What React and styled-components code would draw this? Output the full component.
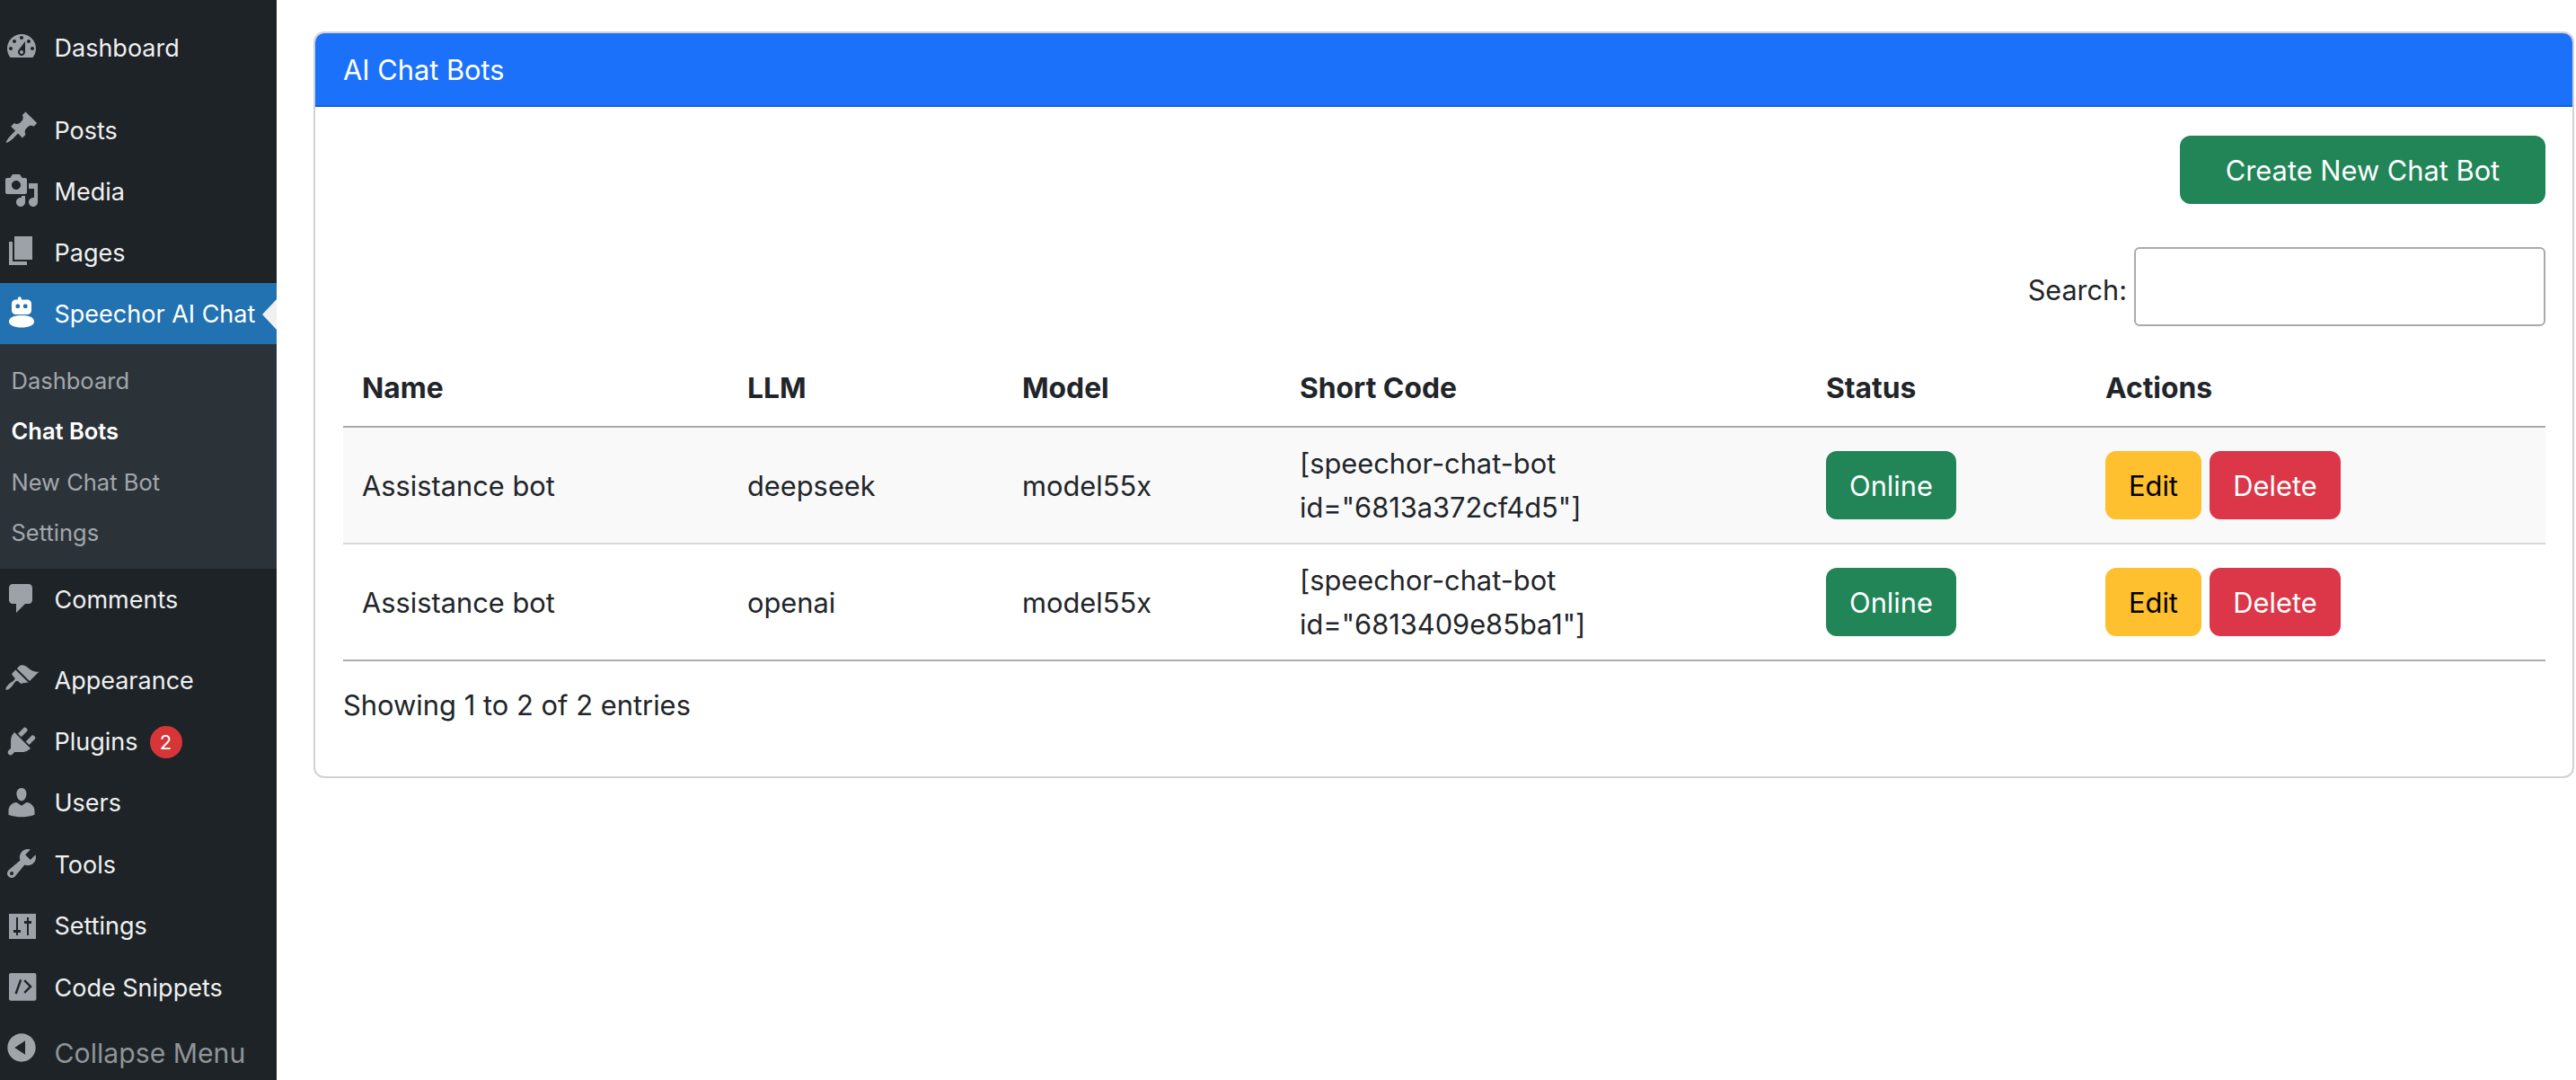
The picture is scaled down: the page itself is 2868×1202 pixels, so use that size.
import React from "react";
import styled, { createGlobalStyle } from "styled-components";

const Global = createGlobalStyle`
  html, body { margin: 0; padding: 0; height: 1202px; overflow: hidden; background: #fff; }
  body { font-family: Inter, "Liberation Sans", sans-serif; -webkit-font-smoothing: antialiased; color: #212529; }
  * { box-sizing: border-box; }
`;

const Page = styled.div`
  display: flex;
  width: 2868px;
  height: 1202px;
  overflow: hidden;
`;

const Sidebar = styled.nav`
  width: 308px;
  height: 1202px;
  flex: none;
  background: #1d2327;
  padding-top: 19px;
`;

const MenuRow = styled.div`
  position: relative;
  display: flex;
  align-items: center;
  height: ${p => p.$h || 68.4}px;
  margin-top: ${p => p.$gap || 0}px;
  padding-left: 4px;
  background: ${p => (p.$active ? "#2271b1" : "transparent")};
  color: ${p => (p.$muted ? "#8f9498" : p.$active ? "#fff" : "#f0f0f1")};
  font-size: ${p => (p.$muted ? 30.2 : 27)}px;
  line-height: 1;
`;

const IconSvg = styled.svg`
  width: 40px;
  height: 40px;
  flex: none;
  margin-right: 16.5px;
  fill: ${p => p.$color || "#9ca2a7"};
  transform: translateY(${p => p.$dy || -1}px);
`;

const Label = styled.span`
  white-space: nowrap;
`;

const Pointer = styled.span`
  position: absolute;
  right: 0;
  top: 18px;
  width: 0;
  height: 0;
  border-top: 17px solid transparent;
  border-bottom: 17px solid transparent;
  border-right: 16px solid #f0f0f1;
`;

const Badge = styled.span`
  display: inline-flex;
  align-items: center;
  justify-content: center;
  width: 36px;
  height: 36px;
  margin-left: 13px;
  border-radius: 50%;
  background: #d63638;
  color: #fff;
  font-size: 22px;
`;

const SubMenu = styled.div`
  display: flex;
  flex-direction: column;
  height: 250px;
  padding: 12px 0;
  background: #2c3338;
`;

const SubItem = styled.div`
  display: flex;
  align-items: center;
  height: 56.5px;
  padding-left: 12.5px;
  font-size: 25.5px;
  font-weight: ${p => (p.$current ? 600 : 400)};
  color: ${p => (p.$current ? "#fff" : "#a3a7ad")};
`;

const Main = styled.main`
  flex: 1;
  min-width: 0;
  padding: 35px 2px 0 41px;
`;

const Card = styled.section`
  height: 831px;
  border: 2px solid #d2d2d2;
  border-radius: 12px;
  overflow: hidden;
  background: #fff;
`;

const CardHeader = styled.header`
  display: flex;
  align-items: center;
  height: 82px;
  padding: 0 31px;
  background: #1c71fb;
  border-bottom: 2px solid #1560d8;
  color: #fff;
  font-size: 30.8px;
`;

const CardBody = styled.div`
  padding: 32px 30px 0 31px;
`;

const Toolbar = styled.div`
  display: flex;
  justify-content: flex-end;
`;

const Button = styled.button`
  display: inline-flex;
  align-items: center;
  justify-content: center;
  height: 76px;
  width: ${p => p.$w}px;
  padding: 0;
  border: 0;
  border-radius: 12px;
  background: ${p => p.$bg};
  color: ${p => p.$fg || "#fff"};
  font-family: inherit;
  font-size: 30.8px;
`;

const SearchRow = styled.label`
  display: flex;
  justify-content: flex-end;
  align-items: center;
  gap: 8px;
  margin-top: 48px;
  font-size: 30.6px;
`;

const SearchText = styled.span`
  margin-top: 7px;
`;

const SearchInput = styled.input`
  width: 458px;
  height: 88px;
  border: 2px solid #aaa;
  border-radius: 6px;
  background: #fff;
`;

const Table = styled.table`
  width: 2452px;
  margin-top: 25px;
  table-layout: fixed;
  border-collapse: separate;
  border-spacing: 0;
  font-size: 30.8px;
`;

const Th = styled.th`
  height: 88px;
  padding: 0 21px;
  text-align: left;
  font-size: 31.8px;
  font-weight: 700;
  border-bottom: 2px solid #aaa;
`;

const Tr = styled.tr`
  background: ${p => (p.$odd ? "#f9f9f9" : "#fff")};
`;

const Td = styled.td`
  height: 130px;
  padding: 0 21px;
  line-height: 49px;
  border-bottom: 2px solid ${p => (p.$last ? "#adadad" : "#d7d7d7")};
`;

const Actions = styled.div`
  display: flex;
  gap: 9px;
`;

const Info = styled.p`
  margin: 30px 0 0;
  font-size: 30.9px;
  line-height: 38px;
`;

const I = ({ d, dy, color }) => (
  <IconSvg viewBox="0 0 20 20" $dy={dy} $color={color}><path d={d} /></IconSvg>
);

const paths = {
  dashboard: "M3.76 16h12.48c1.1-1.37 1.76-3.11 1.76-5 0-4.42-3.58-8-8-8s-8 3.58-8 8c0 1.89.66 3.63 1.76 5zM10 4c.55 0 1 .45 1 1s-.45 1-1 1-1-.45-1-1 .45-1 1-1zM6 6c.55 0 1 .45 1 1s-.45 1-1 1-1-.45-1-1 .45-1 1-1zm8 0c.55 0 1 .45 1 1s-.45 1-1 1-1-.45-1-1 .45-1 1-1zm-5.37 5.55L12 7v6c0 1.1-.9 2-2 2s-2-.9-2-2c0-.57.24-1.08.63-1.45zM4 10c.55 0 1 .45 1 1s-.45 1-1 1-1-.45-1-1 .45-1 1-1zm12 0c.55 0 1 .45 1 1s-.45 1-1 1-1-.45-1-1 .45-1 1-1zm-5 3c0-.55-.45-1-1-1s-1 .45-1 1 .45 1 1 1 1-.45 1-1z",
  pin: "M10.44 3.02l1.82-1.82 6.36 6.35-1.83 1.82c-1.05-.68-2.48-.57-3.41.36l-.75.75c-.92.93-1.04 2.35-.35 3.41l-1.83 1.82-2.41-2.41-2.8 2.79c-.42.42-3.38 2.71-3.8 2.29s1.86-3.39 2.28-3.81l2.79-2.79L4.1 9.36l1.83-1.82c1.05.69 2.48.57 3.4-.36l.75-.75c.93-.92 1.05-2.35.36-3.41z",
  media: "M13 11V4c0-.55-.45-1-1-1h-1.67L9 1H5L3.67 3H2c-.55 0-1 .45-1 1v7c0 .55.45 1 1 1h10c.55 0 1-.45 1-1zM7 4.5c1.38 0 2.5 1.12 2.5 2.5S8.38 9.5 7 9.5 4.5 8.38 4.5 7 5.62 4.5 7 4.5zM14 6h5v10.5c0 1.38-1.12 2.5-2.5 2.5S14 17.88 14 16.5s1.12-2.5 2.5-2.5c.17 0 .34.02.5.05V9h-3V6zm-4 8.05V13h2v3.5c0 1.38-1.12 2.5-2.5 2.5S7 17.88 7 16.5 8.12 14 9.5 14c.17 0 .34.02.5.05z",
  page: "M6 15V2h10v13H6zm-1 1h8v2H3V5h2v11z",
  comment: "M5 2h9c1.1 0 2 .9 2 2v7c0 1.1-.9 2-2 2h-2l-5 5v-5H5c-1.1 0-2-.9-2-2V4c0-1.1.9-2 2-2z",
  brush: "M14.48 11.06L7.41 3.99l1.5-1.5c.5-.56 2.3-.47 3.51.32 1.21.8 1.43 1.28 2.91 2.1 1.18.64 2.45 1.26 4.45.85zm-.71.71L6.7 4.7 4.93 6.47c-.39.39-.39 1.02 0 1.41l1.06 1.06c.39.39.39 1.03 0 1.42-.6.6-1.43 1.11-2.21 1.69-.35.26-.7.53-1.01.84-.59.59-2.01 2.27-1.42 2.86.59.59 2.27-.82 2.86-1.41.31-.31.58-.66.84-1.01.58-.78 1.09-1.61 1.69-2.21.39-.39 1.03-.39 1.42 0l1.06 1.06c.39.39 1.02.39 1.41 0z",
  plugin: "M13.11 4.36L9.87 7.6 8 5.73l3.24-3.24c.35-.34 1.05-.2 1.56.32.52.51.66 1.21.31 1.55zm-8 1.77l.91-1.12 9.01 9.01-1.19.84c-.71.71-2.63 1.16-3.82 1.16H6.14L4.9 17.26c-.59.59-1.54.59-2.12 0-.59-.58-.59-1.53 0-2.12l1.24-1.24v-3.88c0-1.13.4-3.19 1.09-3.89zm7.26 3.97l3.24-3.24c.34-.35 1.04-.21 1.55.31.52.51.66 1.21.31 1.55l-3.24 3.25z",
  users: "M10 9.25c-2.27 0-2.73-3.44-2.73-3.44C7 4.02 7.82 2 9.97 2c2.16 0 2.98 2.02 2.71 3.81 0 0-.41 3.44-2.68 3.44zm0 2.57L12.72 10c2.39 0 4.52 2.33 4.52 4.53v2.49s-3.65 1.13-7.24 1.13c-3.65 0-7.24-1.13-7.24-1.13v-2.49c0-2.25 1.94-4.48 4.47-4.48z",
  tools: "M16.68 9.77c-1.34 1.34-3.3 1.67-4.95.99l-5.41 6.52c-.99.99-2.59.99-3.58 0s-.99-2.59 0-3.57l6.52-5.42c-.68-1.65-.35-3.61.99-4.95 1.28-1.28 3.12-1.62 4.72-1.06l-2.89 2.89 2.82 2.82 2.86-2.87c.53 1.58.18 3.39-1.08 4.65zM3.81 16.21c.4.39 1.04.39 1.43 0 .4-.4.4-1.04 0-1.43-.39-.4-1.03-.4-1.43 0-.39.39-.39 1.03 0 1.43z",
  collapse: "M10 2.16c4.33 0 7.84 3.51 7.84 7.84s-3.51 7.84-7.84 7.84S2.16 14.33 2.16 10 5.71 2.16 10 2.16zm2 11.72V6.12L6.18 9.97z",
};

const SettingsIcon = () => (
  <IconSvg viewBox="0 0 20 20">
    <path fillRule="evenodd" d="M3 3.5h15v14H3zM7 5.5v7H5.5v1.5H7v1.5h1V14h1.5v-1.5H8v-7zM13 5.5V7.5h-1.5V9H13v6.5h1V9h1.5V7.5H14v-2z" />
  </IconSvg>
);

const CodeIcon = () => (
  <IconSvg viewBox="0 0 20 20">
    <rect x="3" y="2.5" width="15.2" height="15.4" rx="1" />
    <path d="M6.8 14L9.6 6.2M11.6 6.6L15 10l-3.4 3.4" fill="none" stroke="#1d2327" strokeWidth="1.2" />
  </IconSvg>
);

const RobotIcon = () => (
  <IconSvg viewBox="0 0 40 40" $color="#fff" $dy={0}>
    <path d="M16 4.2a2 2 0 0 1 4 0V6h-4z" transform="translate(-.2 0)" />
    <rect x="9" y="5.5" width="22" height="16.5" rx="4.5" />
    <path d="M6 30c0-4.6 5-7 14-7s14 2.4 14 7c0 4-6 6.500-14 6.500S6 34 6 30z" />
    <rect x="13.500" y="10.500" width="4.500" height="4.500" rx="1.500" fill="#2271b1" />
    <rect x="22" y="10.500" width="4.500" height="4.500" rx="1.500" fill="#2271b1" />
  </IconSvg>
);

const subItems = [["Dashboard"], ["Chat Bots", true], ["New Chat Bot"], ["Settings"]];

const bots = [
  { llm: "deepseek", id: "6813a372cf4d5" },
  { llm: "openai", id: "6813409e85ba1" },
];

const widths = [429, 306, 309, 586, 311, 511];

export default function App() {
  return (
    <Page>
      <Global />
      <Sidebar>
        <MenuRow $h={68}><I d={paths.dashboard} dy={0} /><Label>Dashboard</Label></MenuRow>
        <MenuRow $h={68} $gap={24}><I d={paths.pin} dy={-3} /><Label>Posts</Label></MenuRow>
        <MenuRow $h={68}><I d={paths.media} /><Label>Media</Label></MenuRow>
        <MenuRow $h={68}><I d={paths.page} dy={-2} /><Label>Pages</Label></MenuRow>
        <MenuRow $active $h={68}><RobotIcon /><Label>Speechor AI Chat</Label><Pointer /></MenuRow>
        <SubMenu>
          {subItems.map(([t, cur]) => <SubItem key={t} $current={cur}>{t}</SubItem>)}
        </SubMenu>
        <MenuRow $h={68}><I d={paths.comment} /><Label>Comments</Label></MenuRow>
        <MenuRow $gap={22}><I d={paths.brush} dy={-1} /><Label>Appearance</Label></MenuRow>
        <MenuRow><I d={paths.plugin} dy={-1} /><Label>Plugins</Label><Badge>2</Badge></MenuRow>
        <MenuRow><I d={paths.users} /><Label>Users</Label></MenuRow>
        <MenuRow><I d={paths.tools} /><Label>Tools</Label></MenuRow>
        <MenuRow><SettingsIcon /><Label>Settings</Label></MenuRow>
        <MenuRow><CodeIcon /><Label>Code Snippets</Label></MenuRow>
        <MenuRow $muted $gap={5}><I d={paths.collapse} dy={-7} color="#a0a5aa" /><Label>Collapse Menu</Label></MenuRow>
      </Sidebar>
      <Main>
        <Card>
          <CardHeader>AI Chat Bots</CardHeader>
          <CardBody>
            <Toolbar><Button $w={407} $bg="#218557">Create New Chat Bot</Button></Toolbar>
            <SearchRow><SearchText>Search:</SearchText><SearchInput /></SearchRow>
            <Table>
              <colgroup>{widths.map((w, i) => <col key={i} width={w} />)}</colgroup>
              <thead>
                <tr>{["Name", "LLM", "Model", "Short Code", "Status", "Actions"].map(h => <Th key={h}>{h}</Th>)}</tr>
              </thead>
              <tbody>
                {bots.map((b, i) => {
                  const last = i === bots.length - 1;
                  return (
                    <Tr key={b.id} $odd={i === 0}>
                      <Td $last={last}>Assistance bot</Td>
                      <Td $last={last}>{b.llm}</Td>
                      <Td $last={last}>model55x</Td>
                      <Td $last={last}>[speechor-chat-bot<br />id="{b.id}"]</Td>
                      <Td $last={last}><Button $w={145} $bg="#218557">Online</Button></Td>
                      <Td $last={last}>
                        <Actions>
                          <Button $w={107} $bg="#fec02f" $fg="#000">Edit</Button>
                          <Button $w={146} $bg="#db3749">Delete</Button>
                        </Actions>
                      </Td>
                    </Tr>
                  );
                })}
              </tbody>
            </Table>
            <Info>Showing 1 to 2 of 2 entries</Info>
          </CardBody>
        </Card>
      </Main>
    </Page>
  );
}
